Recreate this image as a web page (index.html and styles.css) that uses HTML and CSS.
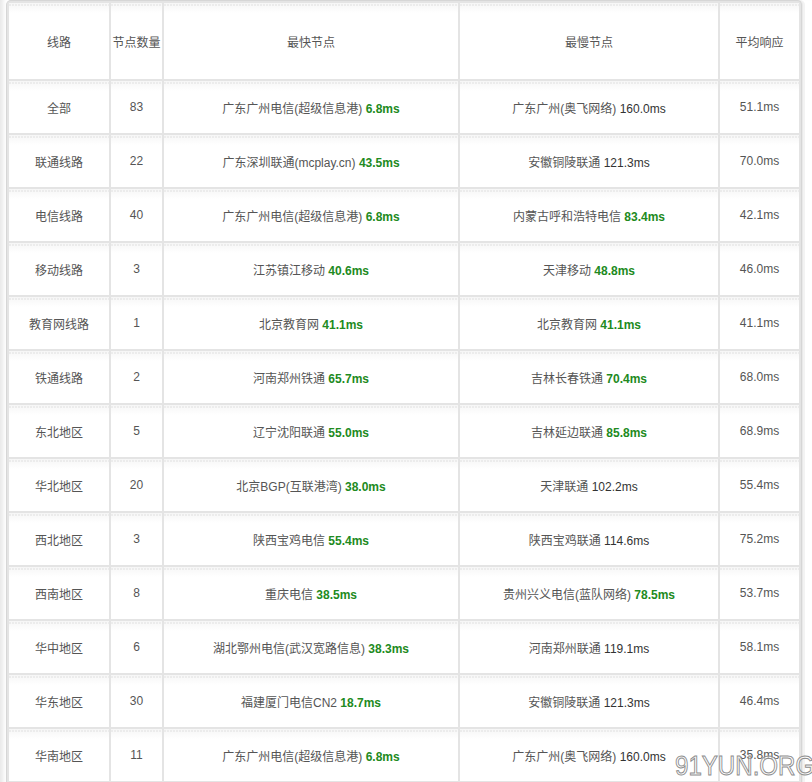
FILE: index.html
```html
<!DOCTYPE html>
<html lang="zh-CN">
<head>
<meta charset="utf-8">
<title>节点测速</title>
<link rel="stylesheet" href="styles.css">
</head>
<body>
<div class="panel">
  <table class="speed">
    <colgroup>
      <col class="c1"><col class="c2"><col class="c3"><col class="c4"><col class="c5">
    </colgroup>
    <thead>
      <tr><th>线路</th><th>节点数量</th><th>最快节点</th><th>最慢节点</th><th>平均响应</th></tr>
    </thead>
    <tbody>
      <tr><td>全部</td><td>83</td><td>广东广州电信(超级信息港) <b>6.8ms</b></td><td>广东广州(奥飞网络) <span class="n">160.0ms</span></td><td>51.1ms</td></tr>
      <tr><td>联通线路</td><td>22</td><td>广东深圳联通(mcplay.cn) <b>43.5ms</b></td><td>安徽铜陵联通 <span class="n">121.3ms</span></td><td>70.0ms</td></tr>
      <tr><td>电信线路</td><td>40</td><td>广东广州电信(超级信息港) <b>6.8ms</b></td><td>内蒙古呼和浩特电信 <b>83.4ms</b></td><td>42.1ms</td></tr>
      <tr><td>移动线路</td><td>3</td><td>江苏镇江移动 <b>40.6ms</b></td><td>天津移动 <b>48.8ms</b></td><td>46.0ms</td></tr>
      <tr><td>教育网线路</td><td>1</td><td>北京教育网 <b>41.1ms</b></td><td>北京教育网 <b>41.1ms</b></td><td>41.1ms</td></tr>
      <tr><td>铁通线路</td><td>2</td><td>河南郑州铁通 <b>65.7ms</b></td><td>吉林长春铁通 <b>70.4ms</b></td><td>68.0ms</td></tr>
      <tr><td>东北地区</td><td>5</td><td>辽宁沈阳联通 <b>55.0ms</b></td><td>吉林延边联通 <b>85.8ms</b></td><td>68.9ms</td></tr>
      <tr><td>华北地区</td><td>20</td><td>北京BGP(互联港湾) <b>38.0ms</b></td><td>天津联通 <span class="n">102.2ms</span></td><td>55.4ms</td></tr>
      <tr><td>西北地区</td><td>3</td><td>陕西宝鸡电信 <b>55.4ms</b></td><td>陕西宝鸡联通 <span class="n">114.6ms</span></td><td>75.2ms</td></tr>
      <tr><td>西南地区</td><td>8</td><td>重庆电信 <b>38.5ms</b></td><td>贵州兴义电信(蓝队网络) <b>78.5ms</b></td><td>53.7ms</td></tr>
      <tr><td>华中地区</td><td>6</td><td>湖北鄂州电信(武汉宽路信息) <b>38.3ms</b></td><td>河南郑州联通 <span class="n">119.1ms</span></td><td>58.1ms</td></tr>
      <tr><td>华东地区</td><td>30</td><td>福建厦门电信CN2 <b>18.7ms</b></td><td>安徽铜陵联通 <span class="n">121.3ms</span></td><td>46.4ms</td></tr>
      <tr><td>华南地区</td><td>11</td><td>广东广州电信(超级信息港) <b>6.8ms</b></td><td>广东广州(奥飞网络) <span class="n">160.0ms</span></td><td>35.8ms</td></tr>
    </tbody>
  </table>
</div>
<div class="watermark">91YUN.ORG</div>
</body>
</html>
```

FILE: styles.css
```css
html, body {
  margin: 0;
  padding: 0;
  background: #ffffff;
  overflow: hidden;
}
body {
  font-family: "Liberation Sans", Arial, "Noto Sans CJK SC", sans-serif;
  font-size: 12px;
  color: #555555;
  height: 782px;
  position: relative;
  box-shadow: inset 6px 0 4px -3px #e8e8e8;
}
.panel {
  margin: 0 0 0 6px;
  width: 794px;
  border: 1px solid #d6d6d6;
  border-bottom: none;
  border-radius: 5px 5px 0 0;
  background: #e4e4e4;
  box-shadow: 1px 0 0 #e9e9e9, 3px 0 0 #f3f3f3;
}
.speed {
  border-collapse: separate;
  border-spacing: 2px;
  table-layout: fixed;
  width: 794px;
  margin: 0;
}
.c1 { width: 100px; }
.c2 { width: 51px; }
.c3 { width: 294px; }
.c4 { width: 258px; }
.c5 { width: 79px; }
.speed th,
.speed td {
  background-color: #ffffff;
  background-image:
    radial-gradient(circle at 1px 1px, #ececec 0.9px, transparent 1.1px),
    linear-gradient(#f6f6f6, #ffffff 10px);
  background-size: 3px 3px, 100% 100%;
  background-repeat: repeat-x, no-repeat;
  background-position: 0 1px, 0 0;
  text-align: center;
  vertical-align: middle;
  padding: 0;
  font-weight: normal;
  color: #555555;
}
.speed th {
  height: 76px;
}
.speed td {
  height: 52px;
}
.speed b {
  color: #218a21;
  font-weight: bold;
}
.speed .n {
  color: #333333;
}
.watermark {
  position: absolute;
  left: 675px;
  top: 750px;
  font-family: "Liberation Sans", Arial, sans-serif;
  font-size: 28px;
  line-height: 32px;
  white-space: nowrap;
  color: rgba(255, 255, 255, 0.55);
  -webkit-text-stroke: 1px #8c8c8c;
  transform: scaleX(0.86);
  transform-origin: 0 0;
}
```
